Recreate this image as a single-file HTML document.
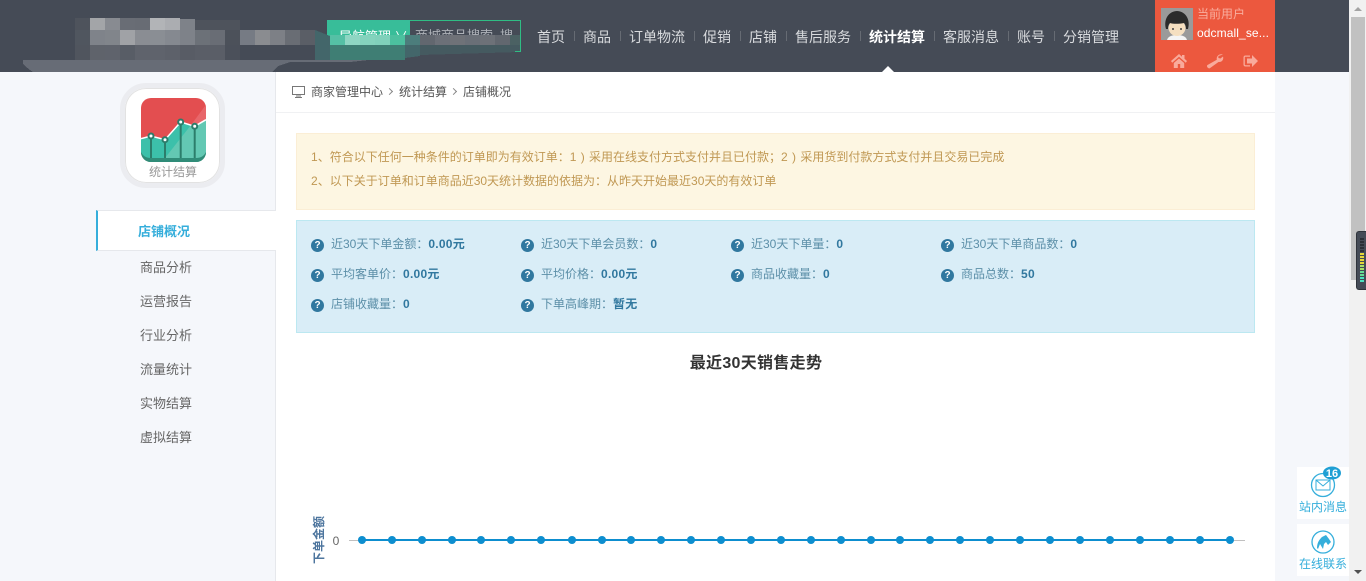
<!DOCTYPE html>
<html lang="zh"><head><meta charset="utf-8"><title>店铺概况</title>
<style>
*{box-sizing:border-box}
html,body{margin:0;padding:0;width:1366px;height:581px;overflow:hidden;background:#f5f7fb;font-family:"Liberation Sans","Noto Sans CJK SC",sans-serif;font-size:12px;color:#555}
.a{position:absolute;white-space:nowrap}
.nav{top:27px;height:20px;line-height:20px;font-size:14px;color:#d9dbde}
.sep{top:31px;width:1px;height:10px;background:#666b73}
.m{left:140px;font-size:13px;line-height:20px;color:#666}
.s{font-size:12px;line-height:18px;color:#5c8fa8;font-family:"Liberation Sans","Noto Sans CJK TC",sans-serif}
.s b{color:#31789f;letter-spacing:.25px}
.q{width:13px;height:13px;border-radius:50%;background:#31789f;color:#fff;font-size:10px;font-weight:bold;line-height:13px;text-align:center;font-family:"Liberation Sans",sans-serif}
.al{line-height:18px;color:#c09853;font-family:"Liberation Sans","Noto Sans CJK TC",sans-serif}
.al i{font-style:normal;font-family:"Noto Sans CJK SC",sans-serif}
.ch{width:5px;height:5px;border-top:1px solid #888;border-right:1px solid #888;transform:rotate(45deg)}
</style></head><body>

<div class="a" style="left:0;top:0;width:1349px;height:72px;background:#454b56"></div>

<!-- green search -->
<div class="a" style="left:327px;top:20px;width:194px;height:32px;border:1px solid #2fbd84"></div>
<div class="a" style="left:327px;top:20px;width:83px;height:32px;background:#38bd99;color:#fff;padding-left:12px;line-height:34px;font-size:13px">导航管理 ∨</div>
<div class="a" style="left:415px;top:21px;color:#aeb2b8;line-height:30px;font-size:13px">商城商品搜索</div>
<div class="a" style="left:500px;top:21px;color:#aeb2b8;line-height:30px;font-size:13px">搜</div>

<!-- mosaic logo -->
<svg class="a" style="left:0;top:0" width="530" height="73" shape-rendering="crispEdges">
<path d="M23 60H368L350 62H290L278 66L272 72H33L30 70L25 66L23 64Z" fill="#676c76"/>
<rect x="75" y="18" width="15" height="12" fill="#4e535c"/><rect x="90" y="18" width="15" height="12" fill="#a3a5a8"/><rect x="105" y="18" width="15" height="12" fill="#888b91"/><rect x="120" y="18" width="15" height="12" fill="#696d75"/><rect x="135" y="18" width="15" height="12" fill="#686c74"/><rect x="150" y="18" width="15" height="12" fill="#b2b4b7"/><rect x="165" y="18" width="15" height="12" fill="#abadb1"/><rect x="180" y="19" width="15" height="11" fill="#7e8289"/><rect x="195" y="20" width="45" height="10" fill="#4e535c"/>
<rect x="75" y="30" width="15" height="15" fill="#50565f"/><rect x="90" y="30" width="15" height="15" fill="#7f838a"/><rect x="105" y="30" width="15" height="15" fill="#81858b"/><rect x="120" y="30" width="15" height="15" fill="#a0a2a6"/><rect x="135" y="30" width="15" height="15" fill="#8a8d93"/><rect x="150" y="30" width="15" height="15" fill="#8a8e94"/><rect x="165" y="30" width="15" height="15" fill="#858990"/><rect x="180" y="30" width="15" height="15" fill="#7e8289"/><rect x="195" y="30" width="15" height="15" fill="#6c7178"/><rect x="210" y="30" width="15" height="15" fill="#696d75"/><rect x="225" y="30" width="15" height="15" fill="#4c515a"/><rect x="240" y="30" width="15" height="15" fill="#767b84"/><rect x="255" y="30" width="15" height="15" fill="#8a8c90"/><rect x="270" y="30" width="15" height="15" fill="#7d8086"/><rect x="285" y="30" width="15" height="15" fill="#696d74"/><rect x="300" y="30" width="15" height="15" fill="#5a5e66"/>
<rect x="75" y="45" width="15" height="15" fill="#50555e"/><rect x="90" y="45" width="15" height="15" fill="#5f636b"/><rect x="105" y="45" width="15" height="15" fill="#5f636c"/><rect x="120" y="45" width="15" height="15" fill="#585d66"/><rect x="135" y="45" width="30" height="15" fill="#5f636c"/><rect x="165" y="45" width="15" height="15" fill="#5d616a"/><rect x="180" y="45" width="15" height="15" fill="#585c65"/><rect x="195" y="45" width="30" height="15" fill="#5a5e67"/><rect x="225" y="45" width="15" height="15" fill="#4b505a"/>
<path d="M315 30L330 36V60H315Z" fill="#43666a"/>
<rect x="330" y="35" width="15" height="10" fill="#55c0a5"/><rect x="345" y="35" width="15" height="10" fill="#8fd6c3"/><rect x="360" y="35" width="15" height="10" fill="#84d3bd"/><rect x="375" y="35" width="15" height="10" fill="#80d1bb"/><rect x="390" y="35" width="15" height="10" fill="#4cc09f"/><rect x="405" y="35" width="15" height="10" fill="#4c7d7c"/>
<rect x="420" y="35" width="15" height="10" fill="#62676f"/><rect x="435" y="35" width="15" height="10" fill="#6c7078"/><rect x="450" y="35" width="15" height="10" fill="#6f7278"/><rect x="465" y="35" width="15" height="10" fill="#6a6f77"/><rect x="480" y="35" width="15" height="10" fill="#6d7178"/><rect x="495" y="35" width="15" height="10" fill="#62676f"/><rect x="510" y="35" width="10" height="10" fill="#4b6163"/>
<rect x="330" y="45" width="75" height="15" fill="#3f7e74"/><path d="M405 45H420V56L405 58Z" fill="#43666a"/><path d="M420 45H520V52L420 55Z" fill="#455a60"/>
<rect x="515" y="51" width="6" height="1" fill="#2fbd84"/>
</svg>

<!-- nav -->
<div class="a nav" style="left:537px">首页</div><div class="a sep" style="left:574px"></div>
<div class="a nav" style="left:583px">商品</div><div class="a sep" style="left:620px"></div>
<div class="a nav" style="left:629px">订单物流</div><div class="a sep" style="left:694px"></div>
<div class="a nav" style="left:703px">促销</div><div class="a sep" style="left:740px"></div>
<div class="a nav" style="left:749px">店铺</div><div class="a sep" style="left:786px"></div>
<div class="a nav" style="left:795px">售后服务</div><div class="a sep" style="left:860px"></div>
<div class="a nav" style="left:869px;color:#fff;font-weight:bold">统计结算</div><div class="a sep" style="left:934px"></div>
<div class="a nav" style="left:943px">客服消息</div><div class="a sep" style="left:1008px"></div>
<div class="a nav" style="left:1017px">账号</div><div class="a sep" style="left:1054px"></div>
<div class="a nav" style="left:1063px">分销管理</div>
<div class="a" style="left:882px;top:66px;width:0;height:0;border-left:6px solid transparent;border-right:6px solid transparent;border-bottom:6px solid #fff"></div>

<!-- user -->
<div class="a" style="left:1155px;top:0;width:120px;height:72px;background:#ec583e"></div>
<svg class="a" style="left:1161px;top:8px" width="32" height="32" viewBox="0 0 32 32">
<rect width="32" height="32" fill="#9a9a9a"/>
<path d="M6 32C7 28 12 27 16 27S25 28 26 32Z" fill="#f4f4f4"/>
<ellipse cx="16" cy="20" rx="8.500" ry="8" fill="#f5dfc0"/>
<path d="M5 21C2 10 9 3 16 3S30 10 27 21L25 21C25 18 24 16 23 15C18 16 12 16 9 15C8 16 7 18 7 21Z" fill="#2b2b2b"/>
<circle cx="12" cy="21" r="1" fill="#444"/><circle cx="20" cy="21" r="1" fill="#444"/>
</svg>
<div class="a" style="left:1197px;top:6px;font-size:12px;line-height:16px;color:#f9ad9e">当前用户</div>
<div class="a" style="left:1197px;top:24px;font-size:12px;line-height:18px;color:#fff;letter-spacing:.1px">odcmall_se...</div>
<svg class="a" style="left:1171px;top:53px" width="90" height="16" viewBox="0 0 90 16" fill="#f9aa9b">
<path d="M8 1L0 8L1.200 9.700L8 3.800L14.800 9.700L16 8L13.500 5.800V2H11V3.700ZM2.800 10V15H6.800V11H9.200V15H13.200V10L8 5.500Z"/>
<path d="M52 1.500C48.500 .3 45 3 45.800 6.800L36.500 12C35 13 37 16 38.800 15.200L47.500 9C50.800 9.500 53 6.500 52 3.500L49.500 5.500L47.300 5L47.500 3Z"/>
<path d="M79 2.500H74.500C73 2.500 72.500 3.500 72.500 4.500V11.500C72.500 12.500 73 13.500 74.500 13.500H79V12.200H74.700C74 12.200 73.800 12 73.800 11.500V4.500C73.800 4 74 3.800 74.700 3.800H79ZM81 2V5.500H76V10.500H81V14L87 8Z"/>
</svg>

<!-- sidebar -->
<div class="a" style="left:275px;top:72px;width:1px;height:509px;background:#e6e8ec"></div>
<div class="a" style="left:120px;top:83px;width:105px;height:105px;background:#fff;border:5px solid #ebecf0;border-radius:26px;box-shadow:inset 0 0 0 1px #e2e2e2"></div>
<svg class="a" style="left:141px;top:98px" width="65" height="64" viewBox="0 0 65 64">
<defs><clipPath id="c"><rect width="65" height="64" rx="10"/></clipPath></defs>
<g clip-path="url(#c)">
<rect width="65" height="64" fill="#e34e50"/>
<path d="M65 6.700L50 27L53.700 28.300L65 21.700Z" fill="#e8666a"/>
<path d="M0 40.700L10 38L24 41.700L39.700 24L53.700 28.300L65 21.700V64H0Z" fill="#3cc0aa"/>
<path d="M65 21.700L53.700 28.300L50 27L24 60V64H65Z" fill="#63c8b3"/>
<path d="M0 40.700L10 38L24 41.700L39.700 24L53.700 28.300L65 21.700" fill="none" stroke="#fff" stroke-width="1.500"/>
<path d="M0 54C2 58 5 60 10 60H55C60 60 63 58 65 54V64H0Z" fill="#308c78"/>
<g stroke="#2c7d6b" stroke-width="2"><path d="M10 38V60M24 42V60M39.700 24V60M53.700 28V60"/></g>
<g fill="#fff" stroke="#2c7d6b" stroke-width="2"><circle cx="10" cy="38" r="2.500"/><circle cx="24" cy="41.700" r="2.500"/><circle cx="39.700" cy="24" r="2.500"/><circle cx="53.700" cy="28.300" r="2.500"/></g>
</g></svg>
<div class="a" style="left:149px;top:163px;font-size:12px;line-height:18px;color:#999">统计结算</div>

<div class="a" style="left:96px;top:210px;width:180px;height:41px;background:#fff;border-top:1px solid #e6e8ec;border-bottom:1px solid #e6e8ec;border-left:2px solid #35aedb"></div>
<div class="a m" style="left:138px;top:222px;color:#35aedb;font-weight:bold">店铺概况</div>
<div class="a m" style="top:258px">商品分析</div>
<div class="a m" style="top:292px">运营报告</div>
<div class="a m" style="top:326px">行业分析</div>
<div class="a m" style="top:360px">流量统计</div>
<div class="a m" style="top:394px">实物结算</div>
<div class="a m" style="top:428px">虚拟结算</div>

<!-- main -->
<div class="a" style="left:276px;top:72px;width:999px;height:509px;background:#fff"></div>
<div class="a" style="left:276px;top:112px;width:999px;height:1px;background:#f0f1f3"></div>
<svg class="a" style="left:292px;top:86px" width="13" height="12" viewBox="0 0 13 12"><path d="M.5.500H12.500V8.500H.5Z" fill="none" stroke="#777"/><path d="M4 10.500H9V9.500H4ZM3 11H10V12H3Z" fill="#777"/></svg>
<div class="a" style="left:311px;top:83px;line-height:18px;color:#555">商家管理中心</div>
<div class="a ch" style="left:387px;top:89px"></div>
<div class="a" style="left:399px;top:83px;line-height:18px;color:#555">统计结算</div>
<div class="a ch" style="left:451px;top:89px"></div>
<div class="a" style="left:463px;top:83px;line-height:18px;color:#555">店铺概况</div>

<div class="a" style="left:296px;top:133px;width:959px;height:77px;background:#fdf6e2;border:1px solid #fbeed5"></div>
<div class="a al" style="left:311px;top:148px;word-spacing:1px">1<i>、</i>符合以下任何一种条件的订单即为有效订单：1 ) 采用在线支付方式支付并且已付款；2 ) 采用货到付款方式支付并且交易已完成</div>
<div class="a al" style="left:311px;top:172px">2<i>、</i>以下关于订单和订单商品近30天统计数据的依据为：从昨天开始最近30天的有效订单</div>

<div class="a" style="left:296px;top:220px;width:959px;height:113px;background:#d9edf7;border:1px solid #bce8f1"></div>

<div class="a q" style="left:311px;top:239px">?</div><div class="a s" style="left:331px;top:235px">近30天下单金额：<b>0.00元</b></div>
<div class="a q" style="left:521px;top:239px">?</div><div class="a s" style="left:541px;top:235px">近30天下单会员数：<b>0</b></div>
<div class="a q" style="left:731px;top:239px">?</div><div class="a s" style="left:751px;top:235px">近30天下单量：<b>0</b></div>
<div class="a q" style="left:941px;top:239px">?</div><div class="a s" style="left:961px;top:235px">近30天下单商品数：<b>0</b></div>

<div class="a q" style="left:311px;top:269px">?</div><div class="a s" style="left:331px;top:265px">平均客单价：<b>0.00元</b></div>
<div class="a q" style="left:521px;top:269px">?</div><div class="a s" style="left:541px;top:265px">平均价格：<b>0.00元</b></div>
<div class="a q" style="left:731px;top:269px">?</div><div class="a s" style="left:751px;top:265px">商品收藏量：<b>0</b></div>
<div class="a q" style="left:941px;top:269px">?</div><div class="a s" style="left:961px;top:265px">商品总数：<b>50</b></div>

<div class="a q" style="left:311px;top:299px">?</div><div class="a s" style="left:331px;top:295px">店铺收藏量：<b>0</b></div>
<div class="a q" style="left:521px;top:299px">?</div><div class="a s" style="left:541px;top:295px">下单高峰期：<b>暂无</b></div>

<div class="a" style="left:296px;top:352px;width:920px;text-align:center;font-size:16px;font-weight:bold;line-height:24px;color:#333;letter-spacing:.3px">最近30天销售走势</div>

<!-- chart -->
<svg class="a" style="left:296px;top:500px" width="960" height="81">
<rect x="53" y="40" width="896" height="1" fill="#c0c0c0"/>
<path d="M66 40H934" stroke="#0d8ecf" stroke-width="2" fill="none"/>
<g fill="#0d8ecf">
<circle cx="66" cy="40" r="4"/><circle cx="96" cy="40" r="4"/><circle cx="126" cy="40" r="4"/><circle cx="156" cy="40" r="4"/><circle cx="185" cy="40" r="4"/><circle cx="215" cy="40" r="4"/><circle cx="245" cy="40" r="4"/><circle cx="276" cy="40" r="4"/><circle cx="306" cy="40" r="4"/><circle cx="335" cy="40" r="4"/><circle cx="365" cy="40" r="4"/><circle cx="395" cy="40" r="4"/><circle cx="425" cy="40" r="4"/><circle cx="455" cy="40" r="4"/><circle cx="485" cy="40" r="4"/><circle cx="515" cy="40" r="4"/><circle cx="545" cy="40" r="4"/><circle cx="575" cy="40" r="4"/><circle cx="604" cy="40" r="4"/><circle cx="634" cy="40" r="4"/><circle cx="664" cy="40" r="4"/><circle cx="694" cy="40" r="4"/><circle cx="724" cy="40" r="4"/><circle cx="754" cy="40" r="4"/><circle cx="784" cy="40" r="4"/><circle cx="814" cy="40" r="4"/><circle cx="844" cy="40" r="4"/><circle cx="874" cy="40" r="4"/><circle cx="904" cy="40" r="4"/><circle cx="934" cy="40" r="4"/>
</g>
<text x="40" y="45" font-size="12" text-anchor="middle" fill="#666" font-family="Liberation Sans">0</text>
<text transform="translate(27,64) rotate(-90)" font-size="12" font-weight="bold" fill="#4d759e" font-family="Liberation Sans,Noto Sans CJK SC,sans-serif" textLength="48">下单金额</text>
</svg>

<!-- floating -->
<div class="a" style="left:1297px;top:467px;width:52px;height:52px;background:#fff"></div>
<svg class="a" style="left:1309px;top:466px" width="36" height="34" viewBox="0 0 36 34">
<circle cx="14" cy="19" r="11.500" fill="#fff" stroke="#35aedb" stroke-width="1.300"/>
<rect x="7" y="14" width="14" height="10" fill="none" stroke="#35aedb"/><path d="M7 14L14 20L21 14" fill="none" stroke="#35aedb"/>
<ellipse cx="23" cy="7" rx="9" ry="6.500" fill="#1f9fd4"/>
<text x="23" y="11" font-size="11" font-weight="bold" fill="#fff" text-anchor="middle" font-family="Liberation Sans">16</text>
</svg>
<div class="a" style="left:1299px;top:499px;line-height:17px;color:#35aedb">站内消息</div>
<div class="a" style="left:1297px;top:524px;width:52px;height:52px;background:#fff"></div>
<svg class="a" style="left:1311px;top:530px" width="24" height="24" viewBox="0 0 24 24">
<circle cx="12" cy="12" r="11" fill="#fff" stroke="#35aedb" stroke-width="1.300"/>
<path d="M6 18C6 12 9 9 11 7L15 5L18 9L20 12L17 15L15 12L13 14L12 19L9 14L7 19Z" fill="#35aedb"/>
</svg>
<div class="a" style="left:1299px;top:556px;line-height:17px;color:#35aedb">在线联系</div>

<!-- scrollbar -->
<div class="a" style="left:1349px;top:0;width:17px;height:581px;background:#f1f1f1"></div>
<div class="a" style="left:1351px;top:17px;width:14px;height:263px;background:#c1c1c1"></div>
<div class="a" style="left:1354px;top:7px;width:0;height:0;border-left:4px solid transparent;border-right:4px solid transparent;border-bottom:4px solid #a3a3a3"></div>
<div class="a" style="left:1354px;top:570px;width:0;height:0;border-left:4px solid transparent;border-right:4px solid transparent;border-top:4px solid #505050"></div>
<div class="a" style="left:1356px;top:231px;width:10px;height:59px;background:#454b56;border:1px solid #2f333a;border-right:0;border-radius:3px 0 0 3px"></div>
<svg class="a" style="left:1360px;top:237px" width="5" height="48" shape-rendering="crispEdges">
<g fill="#2b2f36"><rect y="1" width="4" height="2"/><rect y="4" width="4" height="2"/><rect y="7" width="4" height="2"/><rect y="10" width="4" height="2"/><rect y="13" width="4" height="2"/></g>
<g fill="#e5d638"><rect y="16" width="4" height="2"/><rect y="19" width="4" height="2"/><rect y="22" width="4" height="2"/><rect y="25" width="4" height="2"/></g>
<g fill="#a9df68"><rect y="28" width="4" height="2"/><rect y="31" width="4" height="2"/></g>
<g fill="#67dd95"><rect y="34" width="4" height="2"/><rect y="37" width="4" height="2"/></g>
<g fill="#4be3c0"><rect y="40" width="4" height="2"/><rect y="43" width="4" height="2"/></g>
</svg>
</body></html>
